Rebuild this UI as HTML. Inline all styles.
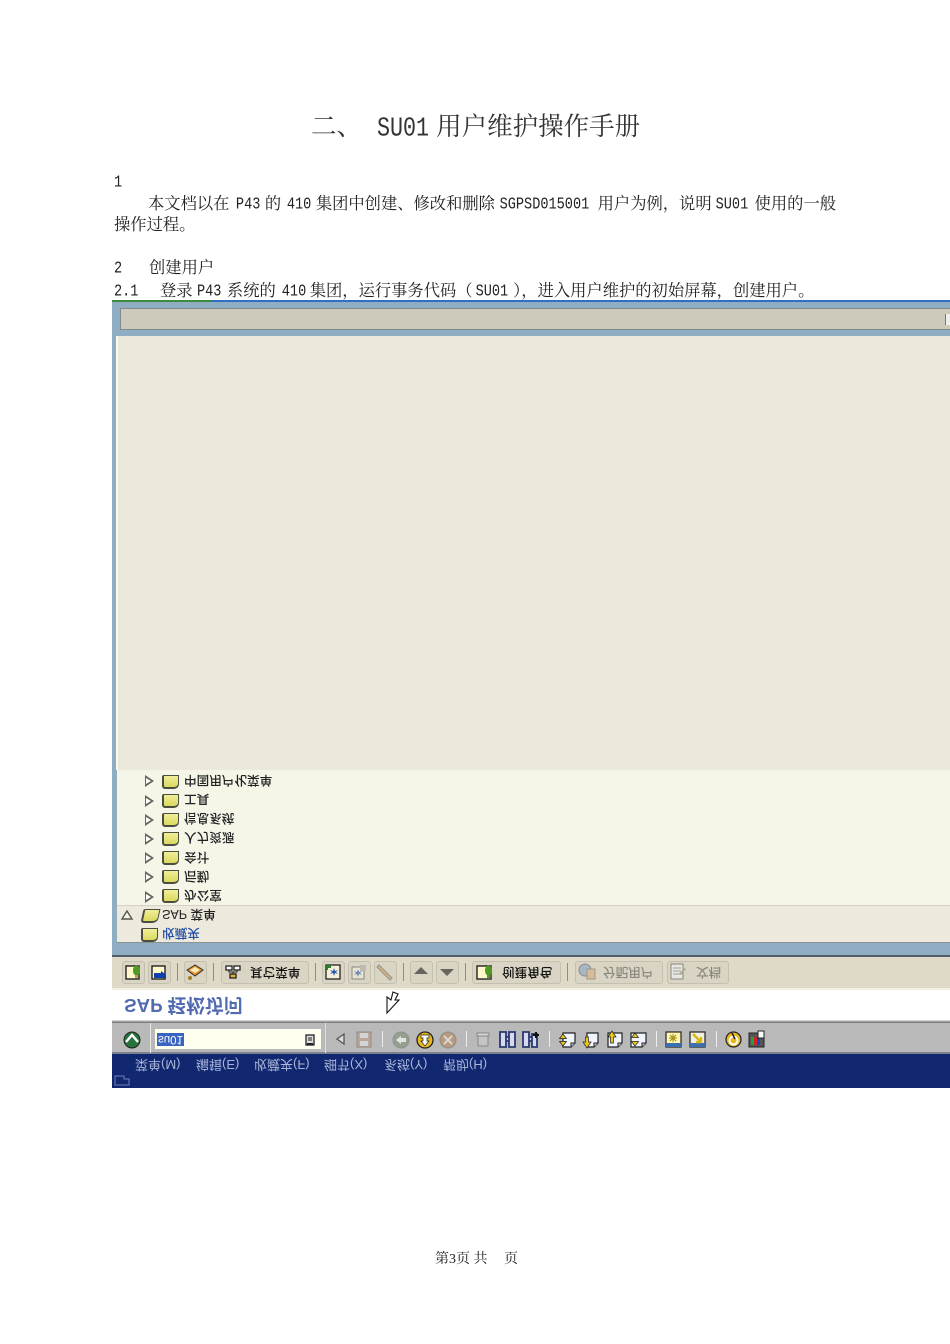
<!DOCTYPE html>
<html lang="zh"><head><meta charset="utf-8"><title>SU01</title>
<style>
html,body{margin:0;padding:0;background:#fff}
body{width:950px;height:1344px;position:relative;overflow:hidden;font-family:"Liberation Serif","Noto Serif CJK SC",serif;color:#222}
.a{position:absolute}
.w{position:absolute;left:0;top:0;width:950px;height:1344px;filter:blur(.35px)}
.t{position:absolute;white-space:nowrap;font-size:16.3px;line-height:20px;color:#222}
.m{display:inline-block;width:auto;font-family:"Liberation Mono",monospace;font-size:13.58px;transform:scaleY(1.2);position:relative;top:-1px}
.f{position:absolute;white-space:nowrap;font-family:"Liberation Sans","Noto Sans CJK SC",sans-serif;font-size:12.6px;line-height:16px;transform:scaleY(-1);color:#222;font-weight:500}
.b{position:absolute;top:961px;height:21px;background:#d9d4c3;border:1px solid #c4c0b0;border-radius:3px}
.s{position:absolute;width:1px;background:#8d8d85}
.ar{position:absolute;left:145px;width:0;height:0;border-left:9px solid #66665e;border-top:6px solid transparent;border-bottom:6px solid transparent}
.ar:after{content:"";position:absolute;left:-8px;top:-3.5px;border-left:5px solid #fff;border-top:3.5px solid transparent;border-bottom:3.5px solid transparent}
.fo{position:absolute;left:162px;width:14px;height:11px;background:linear-gradient(#f0ee98,#dcd860);border:1px solid #4a4e40;border-width:1px 1px 2px 2px;border-radius:2px 0 5px 3px}
svg{position:absolute;overflow:visible}
</style></head><body>

<div class="t" style="left:311px;top:111px;font-size:25.5px;line-height:32px;color:#333">二、</div>
<div class="t" style="left:377px;top:111px;font-size:25.5px;line-height:32px;color:#333"><span class="m" style="font-size:21.7px;transform:scaleY(1.25);margin-right:7px">SU01</span>用户维护操作手册</div>

<div class="t" style="left:114px;top:172px"><span class="m">1</span></div>
<div class="t" style="left:148px;top:194px">本文档以在<span class="m" style="margin:0 4.5px 0 6.5px">P43</span>的<span class="m" style="margin:0 4.5px 0 5.7px">410</span>集团中创建、修改和删除<span class="m" style="margin:0 8.4px 0 4.7px">SGPSD015001</span>用户为例，说明<span class="m" style="margin:0 6.4px 0 4px">SU01</span>使用的一般</div>
<div class="t" style="left:114px;top:215px">操作过程。</div>
<div class="t" style="left:114px;top:258px"><span class="m">2</span></div>
<div class="t" style="left:149px;top:258px">创建用户</div>
<div class="t" style="left:114px;top:281px"><span class="m">2.1</span></div>
<div class="t" style="left:160px;top:281px">登录<span class="m" style="margin:0 5.5px 0 4.4px">P43</span>系统的<span class="m" style="margin:0 3.5px 0 6px">410</span>集团，运行事务代码（<span class="m" style="margin:0 5px 0 3px">SU01</span>），进入用户维护的初始屏幕，创建用户。</div>

<div class="w">
<!-- flipped screenshot -->
<div class="a" style="left:112px;top:300px;width:838px;height:2px;background:#2f6fc4"></div>
<div class="a" style="left:112px;top:300px;width:100px;height:2px;background:#3f8a3f"></div>
<div class="a" style="left:112px;top:302px;width:838px;height:653px;background:#8fadc3"></div>
<div class="a" style="left:120px;top:308px;width:830px;height:22px;background:#cdcabb;border:solid #7f8a8a;border-width:1px 0 1px 1px;box-sizing:border-box"></div>
<div class="a" style="left:945px;top:314px;width:5px;height:11px;background:#eee;border-left:1px solid #777;box-sizing:border-box"></div>
<div class="a" style="left:116px;top:336px;width:834px;height:434px;background:#ece8dc;border-left:2px solid #f8f7f0;box-sizing:border-box"></div>
<div class="a" style="left:117px;top:770px;width:833px;height:135px;background:#f5f5e8"></div>
<div class="a" style="left:117px;top:905px;width:833px;height:38px;background:#ede9dd;border-top:1px solid #d5d1c4;border-bottom:1px solid #8a9296;box-sizing:border-box"></div>

<div class="ar" style="top:775px"></div><div class="fo" style="top:775px"></div><div class="f" style="left:184px;top:772px">中国用户化菜单</div>
<div class="ar" style="top:795px"></div><div class="fo" style="top:794px"></div><div class="f" style="left:184px;top:791px">工具</div>
<div class="ar" style="top:814px"></div><div class="fo" style="top:813px"></div><div class="f" style="left:184px;top:810px">信息系统</div>
<div class="ar" style="top:833px"></div><div class="fo" style="top:832px"></div><div class="f" style="left:184px;top:829px">人力资源</div>
<div class="ar" style="top:852px"></div><div class="fo" style="top:851px"></div><div class="f" style="left:184px;top:849px">会计</div>
<div class="ar" style="top:871px"></div><div class="fo" style="top:870px"></div><div class="f" style="left:184px;top:868px">后勤</div>
<div class="ar" style="top:891px"></div><div class="fo" style="top:889px"></div><div class="f" style="left:184px;top:887px">办公室</div>

<svg style="left:121px;top:910px" width="12" height="10"><path d="M6 1L11 9H1Z" fill="#f5f5ea" stroke="#55554e" stroke-width="1.4"/></svg>
<div class="fo" style="left:142px;top:909px;transform:skewX(-12deg)"></div>
<div class="f" style="left:162px;top:906px">SAP 菜单</div>
<div class="fo" style="left:141px;top:928px"></div>
<div class="f" style="left:162px;top:925px;color:#2450a8">收藏夹</div>

<!-- application toolbar -->
<div class="a" style="left:112px;top:955px;width:838px;height:2px;background:#4f5f66"></div>
<div class="a" style="left:112px;top:957px;width:838px;height:31px;background:#dfd9c8"></div>
<div class="a" style="left:112px;top:988px;width:838px;height:2px;background:#f3efdf"></div>
<div class="b" style="left:122px;width:21px"></div>
<div class="b" style="left:148px;width:21px"></div>
<div class="s" style="left:177px;top:963px;height:18px"></div>
<div class="b" style="left:184px;width:21px"></div>
<div class="s" style="left:213px;top:963px;height:18px"></div>
<div class="b" style="left:221px;width:86px"></div>
<div class="s" style="left:315px;top:963px;height:18px"></div>
<div class="b" style="left:322px;width:21px"></div>
<div class="b" style="left:348px;width:21px"></div>
<div class="b" style="left:374px;width:21px"></div>
<div class="s" style="left:403px;top:963px;height:18px"></div>
<div class="b" style="left:410px;width:21px"></div>
<div class="b" style="left:436px;width:21px"></div>
<div class="s" style="left:465px;top:963px;height:18px"></div>
<div class="b" style="left:472px;width:87px"></div>
<div class="s" style="left:567px;top:963px;height:18px"></div>
<div class="b" style="left:575px;width:86px"></div>
<div class="b" style="left:667px;width:60px"></div>

<svg style="left:125px;top:964px" width="16" height="16"><rect x="1" y="2" width="13" height="13" fill="#fff8c8" stroke="#222" stroke-width="1.4"/><path d="M8 6a3.500 4.500 0 1 1 7 0q0 4-2 5v3h-3v-3q-2-1-2-5z" fill="#4f9a22"/><rect x="10" y="11" width="3" height="3" fill="#c89a50"/></svg>
<svg style="left:151px;top:964px" width="16" height="16"><rect x="1" y="2" width="13" height="13" fill="#fff8c8" stroke="#222" stroke-width="1.4"/><path d="M3 9h7V7l5 3.500V14H3z" fill="#123fa8"/></svg>
<svg style="left:186px;top:963px" width="18" height="18"><path d="M1 7L9 2l8 5-8 6z" fill="#e09030" stroke="#333"/><path d="M4 7l5-3 5 3-5 3z" fill="#fbe9b0"/><circle cx="4" cy="15" r="2" fill="#a08020"/></svg>
<svg style="left:225px;top:964px" width="17" height="16"><rect x="1" y="2" width="6" height="4" fill="#fff" stroke="#222" stroke-width="1.3"/><rect x="9" y="2" width="6" height="4" fill="#fff" stroke="#222" stroke-width="1.3"/><rect x="5" y="10" width="6" height="4" fill="#e0b040" stroke="#222" stroke-width="1.3"/><path d="M4 6v2h8V6M8 8v2" fill="none" stroke="#222"/></svg>
<div class="f" style="left:250px;top:964px;color:#111">其它菜单</div>
<svg style="left:325px;top:964px" width="16" height="16"><rect x="1" y="1" width="14" height="14" fill="#f4f0d8" stroke="#222" stroke-width="1.3"/><path d="M9 4l1 3 3-1-2 2 2 2-3-1-1 3-1-3-3 1 2-2-2-2 3 1z" fill="#2a5ab0"/><path d="M0 1h6v3H3v2H0z" fill="#2f7a2f"/></svg>
<svg style="left:351px;top:964px;opacity:.6" width="16" height="16"><rect x="1" y="3" width="12" height="12" fill="#f4f0d8" stroke="#555"/><path d="M7 5l1 3 3-1-2 2 2 2-3-1-1 3-1-3-3 1 2-2-2-2 3 1z" fill="#2a5ab0"/><rect x="9" y="1" width="6" height="6" fill="#aaa"/></svg>
<svg style="left:376px;top:964px;opacity:.7" width="17" height="17"><path d="M3 1l13 13-2 2L1 3z" fill="#d8a860" stroke="#777"/></svg>
<svg style="left:413px;top:966px" width="16" height="10"><path d="M8 1l7 7H1z" fill="#66665e"/></svg>
<svg style="left:439px;top:968px" width="16" height="10"><path d="M1 1h14L8 8z" fill="#66665e"/></svg>
<svg style="left:476px;top:964px" width="18" height="16"><rect x="1" y="2" width="14" height="13" fill="#fff8c8" stroke="#222" stroke-width="1.4"/><path d="M9 6a3.500 4.500 0 1 1 7 0q0 4-2 5v3h-3v-3q-2-1-2-5z" fill="#4f9a22"/></svg>
<div class="f" style="left:502px;top:964px;color:#111">创建角色</div>
<svg style="left:578px;top:963px;opacity:.65" width="19" height="17"><circle cx="7" cy="7" r="6" fill="#8fa8c8" stroke="#666"/><rect x="9" y="6" width="8" height="10" fill="#d8b080" stroke="#777"/></svg>
<div class="f" style="left:603px;top:964px;color:#8a887e">分配用户</div>
<svg style="left:670px;top:963px;opacity:.7" width="18" height="17"><rect x="1" y="1" width="12" height="15" fill="#eee" stroke="#666"/><path d="M3 5h8M3 8h8M3 11h8" stroke="#888"/><path d="M11 12l5-6-2-1-5 6z" fill="#997"/></svg>
<div class="f" style="left:696px;top:964px;color:#8a887e">文档</div>

<!-- title bar -->
<div class="a" style="left:112px;top:990px;width:838px;height:30px;background:#fff"></div>
<div class="a" style="left:124px;top:994px;white-space:nowrap;font:bold 18.8px/22px 'Liberation Sans','Noto Sans CJK SC',sans-serif;color:#3f5aa8;transform:scaleY(-1);opacity:.9">SAP 轻松访问</div>
<svg style="left:385px;top:991px" width="16" height="24"><path d="M2 22V6l4 3 2-8 5 2-3 6h4z" fill="#fff" stroke="#111" stroke-width="1.1"/></svg>

<!-- system toolbar -->
<div class="a" style="left:112px;top:1020px;width:838px;height:3px;background:linear-gradient(#e6e6e6,#666)"></div>
<div class="a" style="left:112px;top:1023px;width:838px;height:30px;background:#b9b9b9"></div>
<div class="a" style="left:112px;top:1052px;width:838px;height:2px;background:#7d8090"></div>
<svg style="left:123px;top:1031px" width="18" height="18"><circle cx="9" cy="9" r="8" fill="#28723c" stroke="#222"/><path d="M3 11L9 4l6 7" fill="none" stroke="#fff" stroke-width="2.4"/></svg>
<div class="a" style="left:150px;top:1023px;width:1px;height:30px;background:#e8e8e8"></div>
<div class="a" style="left:155px;top:1029px;width:166px;height:20px;background:#fffff0"></div>
<div class="a" style="left:157px;top:1033px;width:27px;height:13px;background:#3a64c0"></div>
<div class="a" style="left:158px;top:1032px;font:11.5px/14px 'Liberation Sans',sans-serif;color:#fff;transform:scaleY(-1)">su01</div>
<svg style="left:305px;top:1034px" width="11" height="12"><rect x="1" y="1" width="8" height="10" fill="#ddd" stroke="#222" stroke-width="1.3"/><path d="M3 4h4M3 6h4" stroke="#222"/><rect x="2" y="9" width="6" height="2" fill="#222"/></svg>
<div class="a" style="left:325px;top:1023px;width:1px;height:30px;background:#e0e0e0"></div>
<svg style="left:334px;top:1032px" width="12" height="14"><path d="M10 2L3 7l7 5z" fill="#ddd" stroke="#555" stroke-width="1.3"/></svg>
<svg style="left:356px;top:1031px;opacity:.75" width="16" height="17"><rect x="1" y="1" width="14" height="15" fill="#b8a290" stroke="#8a7a70"/><rect x="4" y="2" width="8" height="5" fill="#ddd"/><rect x="4" y="10" width="8" height="5" fill="#ddd"/></svg>
<div class="s" style="left:382px;top:1031px;height:16px;background:#eee"></div>
<svg style="left:392px;top:1031px;opacity:.8" width="18" height="18"><circle cx="9" cy="9" r="8" fill="#8a9a80" stroke="#888"/><path d="M4 9l5-4v2h5v4H9v2z" fill="#eee"/></svg>
<svg style="left:416px;top:1031px" width="18" height="18"><circle cx="9" cy="9" r="8" fill="#e8b820" stroke="#222" stroke-width="1.3"/><path d="M5 4h8v3h-2v3h2l-4 5-4-5h2V7H5z" fill="#fff" stroke="#222" stroke-width=".7"/></svg>
<svg style="left:439px;top:1031px;opacity:.85" width="18" height="18"><circle cx="9" cy="9" r="8" fill="#b89470" stroke="#888"/><path d="M5 5l8 8M13 5l-8 8" stroke="#ddd" stroke-width="2"/></svg>
<div class="s" style="left:466px;top:1031px;height:16px;background:#eee"></div>
<svg style="left:475px;top:1031px;opacity:.75" width="16" height="17"><path d="M3 5h10v10H3z" fill="#c8c8c8" stroke="#777"/><rect x="2" y="2" width="12" height="3" fill="#ddd" stroke="#777"/></svg>
<svg style="left:499px;top:1031px" width="17" height="17"><path d="M1 1h6v15H1zM10 1h6v15h-6zM7 6h3v4H7z" fill="#d8d8f0" stroke="#2a3a70" stroke-width="1.8"/></svg>
<svg style="left:522px;top:1031px" width="18" height="17"><path d="M1 1h6v15H1zM10 3h5v13h-5zM7 6h3v4H7z" fill="#d8d8f0" stroke="#2a3a70" stroke-width="1.8"/><path d="M14 1v6M11 4h6" stroke="#111" stroke-width="2"/></svg>
<div class="s" style="left:549px;top:1031px;height:16px;background:#eee"></div>
<svg style="left:559px;top:1031px" width="17" height="17"><path d="M4 2h12v10l-4 4H4z" fill="#f0f4ff" stroke="#222" stroke-width="1.2"/><path d="M12 16v-4h4" fill="#bbb" stroke="#222"/><path d="M4 3l3.500 4.500H.5zM4 15L.5 10.500h7z" fill="#e8c820" stroke="#222" stroke-width=".7"/></svg>
<svg style="left:583px;top:1031px" width="16" height="17"><path d="M4 2h11v10l-4 4H4z" fill="#f0f4ff" stroke="#222" stroke-width="1.2"/><path d="M11 16v-4h4" fill="#bbb" stroke="#222"/><path d="M4 17L0 11h2.500V6h3v5H8z" fill="#e8c820" stroke="#222" stroke-width=".7"/></svg>
<svg style="left:607px;top:1031px" width="16" height="17"><path d="M1 2h14v10l-4 4H1z" fill="#f0f4ff" stroke="#222" stroke-width="1.2"/><path d="M11 16v-4h4" fill="#bbb" stroke="#222"/><path d="M5 0l4 6H6.500v6h-3V6H1z" fill="#e8c820" stroke="#222" stroke-width=".7"/></svg>
<svg style="left:630px;top:1031px" width="17" height="17"><path d="M1 2h15v10l-4 4H1z" fill="#f0f4ff" stroke="#222" stroke-width="1.2"/><path d="M12 16v-4h4" fill="#bbb" stroke="#222"/><path d="M5 2l3.500 4.500h-7zM5 15L1.500 10.500h7z" fill="#e8c820" stroke="#222" stroke-width=".7"/></svg>
<div class="s" style="left:656px;top:1031px;height:16px;background:#eee"></div>
<svg style="left:665px;top:1031px" width="17" height="17"><rect x="1" y="1" width="15" height="15" fill="#fff8b0" stroke="#222" stroke-width="1.2"/><rect x="1" y="12" width="15" height="4" fill="#3a70b0"/><path d="M8 3v8M4 7h8M5 4l6 6M11 4l-6 6" stroke="#a08a10"/></svg>
<svg style="left:689px;top:1031px" width="17" height="17"><rect x="1" y="1" width="15" height="15" fill="#f0f0e0" stroke="#222" stroke-width="1.2"/><rect x="1" y="12" width="15" height="4" fill="#3a70b0"/><path d="M4 3l8 8M7 11h5V6" fill="none" stroke="#d8b810" stroke-width="2.4"/></svg>
<div class="s" style="left:716px;top:1031px;height:16px;background:#eee"></div>
<svg style="left:725px;top:1031px" width="17" height="17"><circle cx="8.500" cy="8.500" r="7.500" fill="#e8b820" stroke="#222" stroke-width="1.2"/><circle cx="8.500" cy="9.500" r="4" fill="none" stroke="#fff" stroke-width="2"/><path d="M7 2l3 6" stroke="#222" stroke-width="1.5"/></svg>
<svg style="left:748px;top:1030px" width="17" height="18"><rect x="1" y="3" width="15" height="14" fill="#555" stroke="#222"/><rect x="3" y="7" width="3" height="8" fill="#20a040"/><rect x="6" y="7" width="3" height="8" fill="#d02020"/><rect x="9" y="7" width="3" height="8" fill="#2040c0"/><rect x="10" y="1" width="6" height="7" fill="#fff" stroke="#222"/></svg>

<!-- menu bar -->
<div class="a" style="left:112px;top:1054px;width:838px;height:34px;background:#112870"></div>
<div class="f" style="left:135px;top:1056px;color:#a8b4d8;font-size:13px;font-weight:400">菜单(M)</div>
<div class="f" style="left:196px;top:1056px;color:#a8b4d8;font-size:13px;font-weight:400">编辑(E)</div>
<div class="f" style="left:254px;top:1056px;color:#a8b4d8;font-size:13px;font-weight:400">收藏夹(F)</div>
<div class="f" style="left:324px;top:1056px;color:#a8b4d8;font-size:13px;font-weight:400">细节(X)</div>
<div class="f" style="left:384px;top:1056px;color:#a8b4d8;font-size:13px;font-weight:400">系统(Y)</div>
<div class="f" style="left:443px;top:1056px;color:#a8b4d8;font-size:13px;font-weight:400">帮助(H)</div>
<svg style="left:114px;top:1075px" width="17" height="12"><path d="M1 1h9v3h5v6H1z" fill="none" stroke="#6f80b8"/></svg>
</div>

<div class="t" style="left:435px;top:1250px;font-size:14px">第<span style="font-size:14px">3</span>页 共</div>
<div class="t" style="left:504px;top:1250px;font-size:14px">页</div>
</body></html>
